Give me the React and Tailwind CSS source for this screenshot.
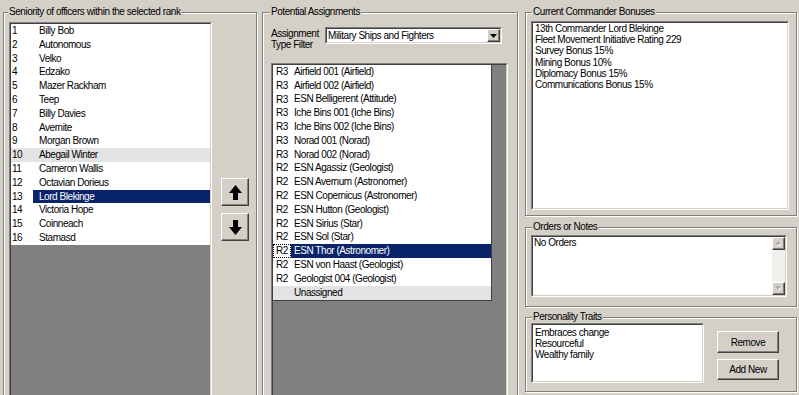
import React from "react";

const officers = [
  "Billy Bob", "Autonomous", "Velko", "Edzako", "Mazer Rackham", "Teep", "Billy Davies", "Avernite",
  "Morgan Brown", "Abegail Winter", "Cameron Wallis", "Octavian Dorieus", "Lord Blekinge", "Victoria Hope",
  "Coinneach", "Stamasd",
];

const assignments = [
  ["R3", "Airfield 001 (Airfield)"],
  ["R3", "Airfield 002 (Airfield)"],
  ["R3", "ESN Belligerent (Attitude)"],
  ["R3", "Iche Bins 001 (Iche Bins)"],
  ["R3", "Iche Bins 002 (Iche Bins)"],
  ["R3", "Norad 001 (Norad)"],
  ["R3", "Norad 002 (Norad)"],
  ["R2", "ESN Agassiz (Geologist)"],
  ["R2", "ESN Avernum (Astronomer)"],
  ["R2", "ESN Copernicus (Astronomer)"],
  ["R2", "ESN Hutton (Geologist)"],
  ["R2", "ESN Sirius (Star)"],
  ["R2", "ESN Sol (Star)"],
  ["R2", "ESN Thor (Astronomer)"],
  ["R2", "ESN von Haast (Geologist)"],
  ["R2", "Geologist 004 (Geologist)"],
  ["", "Unassigned"],
];

const bonuses = [
  "13th Commander Lord Blekinge",
  "Fleet Movement Initiative Rating 229",
  "Survey Bonus 15%",
  "Mining Bonus 10%",
  "Diplomacy Bonus 15%",
  "Communications Bonus 15%",
];

const traits = ["Embraces change", "Resourceful", "Wealthy family"];

function GroupBox({ title, titleClass, className, children }) {
  return (
    <div className={"flex flex-col shrink-0 border border-[#808080] shadow-[inset_1px_1px_0_#fff,1px_1px_0_#fff] " + className}>
      <div className={"-mt-[7px] self-start px-[1px] bg-[#d4d0c8] leading-[12px] whitespace-nowrap " + titleClass}>{title}</div>
      {children}
    </div>
  );
}

function Sunken({ className, innerClass, children }) {
  return (
    <div className={"flex flex-col shrink-0 border border-t-[#808080] border-l-[#808080] border-r-white border-b-white " + className}>
      <div className={"flex-1 min-h-0 border border-t-[#404040] border-l-[#404040] border-r-[#d4d0c8] border-b-[#d4d0c8] " + innerClass}>
        {children}
      </div>
    </div>
  );
}

function Raised({ className, children }) {
  return (
    <div className={"flex items-center justify-center shrink-0 bg-[#d4d0c8] border border-t-white border-l-white border-r-[#404040] border-b-[#404040] shadow-[inset_-1px_-1px_0_#808080] " + className}>
      {children}
    </div>
  );
}

function BigArrow({ down }) {
  return (
    <svg width="13" height="15" viewBox="0 0 13 15" className={down ? "rotate-180" : ""}>
      <path d="M6.5 0 L13 8 L9 8 L9 15 L4 15 L4 8 L0 8 Z" fill="#000" />
    </svg>
  );
}

function SmallTri({ down, color }) {
  return (
    <svg width="7" height="4" viewBox="0 0 7 4">
      {down ? <path d="M0 0 L7 0 L3.5 4 Z" fill={color} /> : <path d="M0 4 L7 4 L3.5 0 Z" fill={color} />}
    </svg>
  );
}

function ScrollTri({ down }) {
  return (
    <svg width="7" height="5" viewBox="0 0 7 5">
      {down ? (
        <>
          <path d="M1.5 1.5 L6.5 1.5 L4 4.5 Z" fill="#fff" />
          <path d="M0.5 0.5 L5.5 0.5 L3 3.5 Z" fill="#a0a0a0" />
        </>
      ) : (
        <>
          <path d="M1.5 4.5 L6.5 4.5 L4 1.5 Z" fill="#fff" />
          <path d="M0.5 3.5 L5.5 3.5 L3 0.5 Z" fill="#a0a0a0" />
        </>
      )}
    </svg>
  );
}

export default function App() {
  return (
    <div className="w-[799px] h-[395px] overflow-hidden bg-[#d4d0c8] text-black flex items-start pt-[12px] pl-[3px] font-['Liberation_Sans',Arial,sans-serif] text-[10px] tracking-[-0.45px]">
      {/* Left group */}
      <GroupBox title="Seniority of officers within the selected rank" titleClass="ml-[4px]" className="w-[254px] h-[400px]">
        <div className="flex flex-1 min-h-0 mt-[4px] ml-[5px]">
          <Sunken className="w-[203px] h-full" innerClass="bg-[#808080]">
            <div className="flex flex-col">
              {officers.map((name, i) => {
                const sel = i === 12;
                const hi = i === 9;
                return (
                  <div key={i} className={"flex h-[13.8px] leading-[13.8px] whitespace-nowrap " + (hi ? "bg-[#e3e3e3]" : "bg-white")}>
                    <div className="w-[22px] pl-[1px]">{i + 1}</div>
                    <div className={"flex-1 pl-[6px] " + (sel ? "bg-[#0a246a] text-white" : "")}>{name}</div>
                  </div>
                );
              })}
            </div>
          </Sunken>
          <div className="flex flex-col ml-[9px] mt-[156px] gap-[7px]">
            <Raised className="w-[28px] h-[28px]">
              <BigArrow />
            </Raised>
            <Raised className="w-[28px] h-[28px]">
              <BigArrow down />
            </Raised>
          </div>
        </div>
      </GroupBox>

      {/* Middle group */}
      <GroupBox title="Potential Assignments" titleClass="ml-[7px]" className="w-[256px] h-[400px] ml-[5px]">
        <div className="flex items-start h-[17px] mt-[9px] ml-[8px]">
          <div className="w-[54px] mt-[2px] leading-[10.5px]">
            Assignment
            <br />
            Type Filter
          </div>
          <Sunken className="w-[177px] h-[17px]" innerClass="bg-white flex items-center">
            <div className="flex-1 pl-[1px] leading-[13px] whitespace-nowrap">Military Ships and Fighters</div>
            <Raised className="w-[13px] h-full">
              <SmallTri down color="#000" />
            </Raised>
          </Sunken>
        </div>
        <Sunken className="w-[237px] flex-1 min-h-0 mt-[19px] ml-[8px]" innerClass="bg-[#808080]">
          <div className="flex flex-col w-[219px] border-r border-b border-[#404040]">
            {assignments.map(([r, name], i) => {
              const sel = i === 13;
              const hi = i === 16;
              return (
                <div key={i} className={"flex h-[13.8px] leading-[12px] whitespace-nowrap " + (hi ? "bg-[#e3e3e3]" : "bg-white")}>
                  <div className="w-[18px] flex items-center">
                    <div className={"h-full w-full pl-[2px] flex items-center border border-dotted " + (sel ? "border-black" : "border-transparent")}>{r}</div>
                  </div>
                  <div className={"flex-1 pl-[3px] flex items-center " + (sel ? "bg-[#0a246a] text-white" : "")}>{name}</div>
                </div>
              );
            })}
          </div>
        </Sunken>
      </GroupBox>

      {/* Right column */}
      <div className="flex flex-col ml-[7px]">
        <GroupBox title="Current Commander Bonuses" titleClass="ml-[6px]" className="w-[272px] h-[204px]">
          <Sunken className="w-[258px] h-[189px] mt-[3px] ml-[5px]" innerClass="bg-white">
            <div className="pl-[2px] leading-[11.2px]">
              {bonuses.map((b) => (
                <div key={b} className="whitespace-nowrap">{b}</div>
              ))}
            </div>
          </Sunken>
        </GroupBox>

        <GroupBox title="Orders or Notes" titleClass="ml-[6px]" className="w-[272px] h-[80px] mt-[11px]">
          <Sunken className="w-[256px] h-[62px] mt-[2px] ml-[5px]" innerClass="bg-white flex">
            <div className="flex-1 pl-[1px] leading-[12px]">No Orders</div>
            <div className="w-[13px] flex flex-col bg-[#f1f0ec]">
              <Raised className="w-[13px] h-[13px]">
                <ScrollTri />
              </Raised>
              <div className="flex-1" />
              <Raised className="w-[13px] h-[13px]">
                <ScrollTri down />
              </Raised>
            </div>
          </Sunken>
        </GroupBox>

        <GroupBox title="Personality Traits" titleClass="ml-[6px]" className="w-[272px] h-[75px] mt-[10px]">
          <div className="flex items-start ml-[5px]">
            <Sunken className="w-[173px] h-[60px]" innerClass="bg-white">
              <div className="pl-[2px] pt-[2px] leading-[11px]">
                {traits.map((t) => (
                  <div key={t} className="whitespace-nowrap">{t}</div>
                ))}
              </div>
            </Sunken>
            <div className="flex flex-col ml-[13px] mt-[8px] gap-[6px]">
              <Raised className="w-[62px] h-[22px]">Remove</Raised>
              <Raised className="w-[62px] h-[21px]">Add New</Raised>
            </div>
          </div>
        </GroupBox>
      </div>
    </div>
  );
}
